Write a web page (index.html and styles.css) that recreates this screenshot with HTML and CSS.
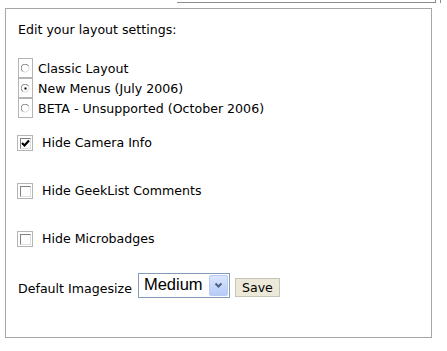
FILE: index.html
```html
<!DOCTYPE html>
<html lang="en">
<head>
    <meta charset="UTF-8">
    <title>Layout Settings</title>
    <link rel="stylesheet" href="styles.css">
</head>
<body>

    <div class="top">
        <div class="top-line"></div>
        <div class="top-tick"></div>
    </div>

    <div class="settings-box">
        <div class="heading">Edit your layout settings:</div>

        <!-- layout choice -->
        <div class="radio-group">
            <div class="radio-row">
                <span class="radio-box">
                    <svg width="9" height="9" viewBox="0 0 9 9"><path d="M7.5 2 A4 4 0 1 0 2 7.5" fill="none" stroke="#6f6f6f" stroke-width="1"/><path d="M2 7.5 A4 4 0 0 0 7.5 2" fill="none" stroke="#dcdcdc" stroke-width="1"/></svg>
                </span>
                <span class="radio-text">Classic Layout</span>
            </div>
            <div class="radio-row">
                <span class="radio-box">
                    <svg width="9" height="9" viewBox="0 0 9 9"><path d="M7.5 2 A4 4 0 1 0 2 7.5" fill="none" stroke="#6f6f6f" stroke-width="1"/><path d="M2 7.5 A4 4 0 0 0 7.5 2" fill="none" stroke="#dcdcdc" stroke-width="1"/><rect x="3.5" y="3.5" width="2" height="2" fill="#000"/></svg>
                </span>
                <span class="radio-text">New Menus (July 2006)</span>
            </div>
            <div class="radio-row">
                <span class="radio-box">
                    <svg width="9" height="9" viewBox="0 0 9 9"><path d="M7.5 2 A4 4 0 1 0 2 7.5" fill="none" stroke="#6f6f6f" stroke-width="1"/><path d="M2 7.5 A4 4 0 0 0 7.5 2" fill="none" stroke="#dcdcdc" stroke-width="1"/></svg>
                </span>
                <span class="radio-text">BETA - Unsupported (October 2006)</span>
            </div>
        </div>

        <!-- options -->
        <div class="check-row first">
            <span class="check-box">
                <span class="check-inner">
                    <svg width="9" height="9" viewBox="0 0 9 9"><path d="M1 4 L3.5 6.5 L8 1.5" fill="none" stroke="#000" stroke-width="2.2"/></svg>
                </span>
            </span>
            <span>Hide Camera Info</span>
        </div>
        <div class="check-row">
            <span class="check-box"><span class="check-inner"></span></span>
            <span>Hide GeekList Comments</span>
        </div>
        <div class="check-row">
            <span class="check-box"><span class="check-inner"></span></span>
            <span>Hide Microbadges</span>
        </div>

        <div class="size-row">
            <span class="size-label">Default Imagesize</span>
            <div class="select">
                <span class="select-value">Medium</span>
                <span class="select-btn">
                    <svg width="9" height="7" viewBox="0 0 9 7"><path d="M1.5 1.5 L4.5 4.5 L7.5 1.5" fill="none" stroke="#4d6185" stroke-width="2"/></svg>
                </span>
            </div>
            <button class="save-btn">Save</button>
        </div>
    </div>

</body>
</html>
```

FILE: styles.css
```css
body {
    margin: 0;
    font-family: "DejaVu Sans", Verdana, sans-serif;
    font-size: 12.6px;
    line-height: 16px;
    color: #000;
    background: #fff;
}

.top {
    display: flex;
    height: 3px;
}

.top-line {
    margin-left: 177px;
    width: 258px;
    border-bottom: 1px solid #8c8c8c;
}

.top-tick {
    width: 4px;
    border-left: 1px solid #8c8c8c;
    border-right: 1px solid #8c8c8c;
}

.settings-box {
    box-sizing: border-box;
    margin: 5px 0 0 5px;
    width: 427px;
    height: 330px;
    border: 1px solid #a6a6a6;
    padding: 13px 0 0 12px;
}

.heading {
    height: 16px;
}

.radio-group {
    margin-top: 20px;
}

.radio-row {
    display: flex;
    align-items: flex-start;
    height: 20px;
}

.radio-box {
    box-sizing: border-box;
    width: 15px;
    height: 20px;
    border: 1px solid #b4b4b4;
    display: flex;
    align-items: center;
    justify-content: center;
}

.radio-text {
    margin-left: 5px;
    padding-top: 3px;
}

.check-row {
    display: flex;
    align-items: center;
    height: 20px;
    margin-top: 28px;
}

.check-row.first {
    margin-top: 15px;
}

.check-box {
    box-sizing: border-box;
    width: 16px;
    height: 16px;
    border: 1px solid #b4b4b4;
    margin: 0 9px 0 -1px;
    padding: 2px 0 0 2px;
}

.check-inner {
    box-sizing: border-box;
    display: flex;
    align-items: center;
    justify-content: center;
    width: 11px;
    height: 11px;
    border-top: 1px solid #808080;
    border-left: 1px solid #808080;
    border-right: 1px solid #e0e0e0;
    border-bottom: 1px solid #e0e0e0;
}

.size-row {
    display: flex;
    align-items: flex-end;
    margin-top: 23px;
    height: 26px;
}

.size-label {
    margin-bottom: 1px;
}

.select {
    box-sizing: border-box;
    display: flex;
    align-items: center;
    justify-content: space-between;
    width: 92px;
    height: 25px;
    margin-left: 6px;
    border: 1px solid #7f9db9;
    padding: 0 1px 0 5px;
}

.select-value {
    font-family: "Liberation Sans", Arial, sans-serif;
    font-size: 16.5px;
    line-height: 20px;
    padding-bottom: 3px;
}

.select-btn {
    box-sizing: border-box;
    display: flex;
    align-items: center;
    justify-content: center;
    width: 19px;
    height: 21px;
    border: 1px solid #b9cbf3;
    border-radius: 2px;
    background: linear-gradient(#dbe6fd, #b6cbf7);
}

.save-btn {
    box-sizing: border-box;
    width: 45px;
    height: 19px;
    margin: 0 0 1px 5px;
    padding: 0;
    font-family: "DejaVu Sans", Verdana, sans-serif;
    font-size: 12.6px;
    line-height: 16px;
    color: #000;
    background: #ece9d8;
    border: 1px solid #c8c5b8;
    border-radius: 0;
}
```
